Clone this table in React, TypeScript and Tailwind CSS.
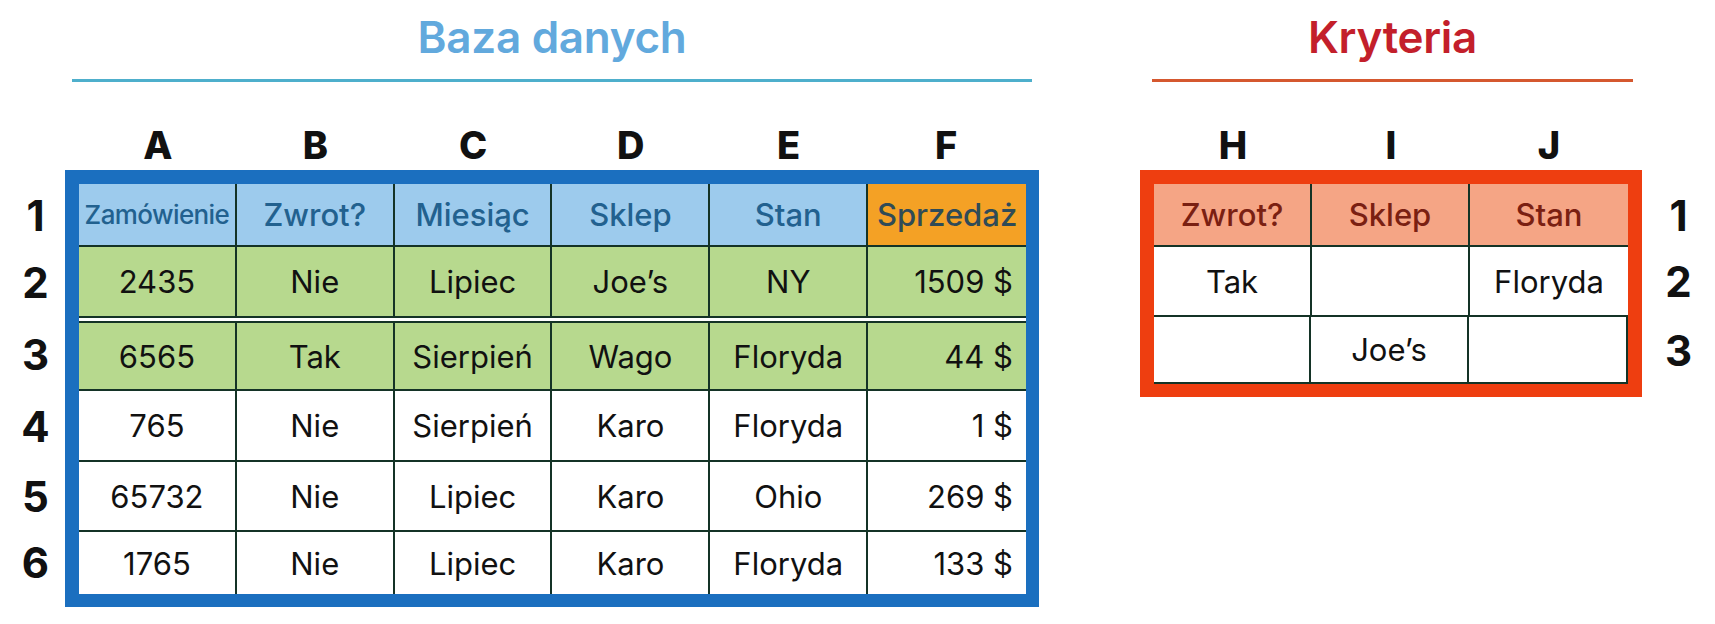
const heights = [63, 71, 73, 71, 70, 62];
const critHeights = [63, 70, 67];

const headers = ["Zamówienie", "Zwrot?", "Miesiąc", "Sklep", "Stan", "Sprzedaż"];

const rows = [
  { green: true, cells: ["2435", "Nie", "Lipiec", "Joe’s", "NY", "1509 $"] },
  { green: true, cells: ["6565", "Tak", "Sierpień", "Wago", "Floryda", "44 $"] },
  { green: false, cells: ["765", "Nie", "Sierpień", "Karo", "Floryda", "1 $"] },
  { green: false, cells: ["65732", "Nie", "Lipiec", "Karo", "Ohio", "269 $"] },
  { green: false, cells: ["1765", "Nie", "Lipiec", "Karo", "Floryda", "133 $"] },
];

const critRows = [
  ["Tak", "", "Floryda"],
  ["", "Joe’s", ""],
];

function Title({ text, color, line, width }: { text: string; color: string; line: string; width: string }) {
  return (
    <div className={`flex flex-col items-center ${width}`}>
      <div className={`h-[60px] flex items-center text-[44px] font-semibold leading-none tracking-[-0.3px] ${color}`}>{text}</div>
      <div className={`mt-[12px] h-[3px] w-full ${line}`} />
    </div>
  );
}

export default function App() {
  return (
    <div className="w-[1715px] h-[624px] bg-white flex pt-[7px] font-['Inter',sans-serif] text-[#111]">
      {/* Baza danych */}
      <div className="flex flex-col w-[1039px]">
        <div className="pl-[72px]">
          <Title text="Baza danych" color="text-[#62a9dd]" line="bg-[#4eafcc]" width="w-[960px]" />
        </div>

        <div className="flex h-[88px]">
          <div className="w-[65px]" />
          <div className="grid grid-cols-6 flex-1 px-[14px] items-end pb-[6px]">
            {["A", "B", "C", "D", "E", "F"].map((l) => (
              <div key={l} className="text-center text-[38px] font-extrabold leading-none">{l}</div>
            ))}
          </div>
        </div>

        <div className="flex">
          <div className="w-[65px] flex flex-col pt-[14px] items-center">
            {heights.map((h, i) => (
              <div key={i} style={{ height: h }} className="flex items-center text-[42px] font-bold leading-none pl-[6px]">
                {i + 1}
              </div>
            ))}
          </div>

          <div className="w-[974px] border-[#1b6fbf] border-t-[14px] border-l-[14px] border-r-[13px] border-b-[13px] flex flex-col bg-white">
            <div style={{ height: heights[0] }} className="grid grid-cols-6 border-b-2 border-[#143326]">
              {headers.map((h, i) => (
                <div
                  key={h}
                  className={`flex items-center justify-center font-medium leading-none ${
                    i === 5 ? "bg-[#f4a125] text-[#2f4b57]" : "bg-[#9dcbed] text-[#22618f] border-r-2 border-[#143326]"
                  } ${i === 0 ? "text-[26px] tracking-[-0.6px]" : "text-[31px]"}`}
                >
                  {h}
                </div>
              ))}
            </div>
            {rows.map((r, ri) => (
              <div
                key={ri}
                style={{ height: heights[ri + 1] }}
                className={`grid grid-cols-6 ${ri < 4 ? "border-b-2 border-[#143326]" : ""} ${ri === 1 ? "border-t-[3px] border-t-white" : ""}`}
              >
                {r.cells.map((c, ci) => (
                  <div
                    key={ci}
                    className={`flex items-center text-[31px] leading-none ${r.green ? "bg-[#b7d98e]" : "bg-white"} ${
                      ci === 5 ? "justify-end pr-[13px]" : "justify-center border-r-2 border-[#143326]"
                    } ${ri === 1 ? "border-t-2 border-t-[#143326]" : ""}`}
                  >
                    {c}
                  </div>
                ))}
              </div>
            ))}
          </div>
        </div>
      </div>

      {/* Kryteria */}
      <div className="flex flex-col ml-[101px]">
        <div className="pl-[12px]">
          <Title text="Kryteria" color="text-[#c31f2b]" line="bg-[#d5582f]" width="w-[481px]" />
        </div>

        <div className="flex h-[88px]">
          <div className="grid grid-cols-3 w-[502px] px-[14px] items-end pb-[6px]">
            {["H", "I", "J"].map((l) => (
              <div key={l} className="text-center text-[38px] font-extrabold leading-none">{l}</div>
            ))}
          </div>
        </div>

        <div className="flex">
          <div className="w-[502px] border-[#ee3e10] border-t-[14px] border-l-[14px] border-r-[14px] border-b-[13px] flex flex-col bg-white">
            <div style={{ height: critHeights[0] }} className="grid grid-cols-3 border-b-2 border-[#143326]">
              {["Zwrot?", "Sklep", "Stan"].map((h, i) => (
                <div
                  key={h}
                  className={`flex items-center justify-center bg-[#f5a585] text-[#7a2012] text-[31px] font-medium leading-none ${
                    i < 2 ? "border-r-2 border-[#143326]" : ""
                  }`}
                >
                  {h}
                </div>
              ))}
            </div>
            {critRows.map((r, ri) => (
              <div
                key={ri}
                style={{ height: critHeights[ri + 1] }}
                className={`grid grid-cols-3 ${ri === 0 ? "border-b-2 border-[#143326]" : "border-r-2 border-b-2 border-[#143326]"}`}
              >
                {r.map((c, ci) => (
                  <div
                    key={ci}
                    className={`flex items-center justify-center text-[31px] leading-none ${ci < 2 ? "border-r-2 border-[#143326]" : ""}`}
                  >
                    {c}
                  </div>
                ))}
              </div>
            ))}
          </div>
          <div className="w-[73px] flex flex-col pt-[14px] items-center">
            {critHeights.map((h, i) => (
              <div key={i} style={{ height: h }} className="flex items-center text-[42px] font-bold leading-none">
                {i + 1}
              </div>
            ))}
          </div>
        </div>
      </div>
    </div>
  );
}
